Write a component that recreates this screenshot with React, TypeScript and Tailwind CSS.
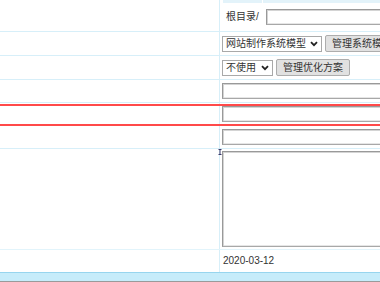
import React from "react";

const font = { fontFamily: '"Liberation Sans", "Noto Sans CJK SC", sans-serif' };

function Chevron() {
  return (
    <svg width="8" height="6" viewBox="0 0 8 6" className="shrink-0">
      <path d="M1 1.2 L4 4.2 L7 1.2" fill="none" stroke="#222" strokeWidth="1.8" />
    </svg>
  );
}

function Input({ w = "w-[320px]" }: { w?: string }) {
  return (
    <div
      className={`${w} h-[16px] shrink-0 bg-white border border-[#a8a8a8] border-t-[#999999] border-l-[#999999] shadow-[inset_1px_1px_0_#d4d4d4,inset_-1px_-1px_0_#e6e6e6]`}
    />
  );
}

function Select({ label, w }: { label: string; w: string }) {
  return (
    <div
      className={`${w} h-[16px] shrink-0 bg-white border border-[#a9a9a9] flex items-center justify-between pl-[3px] pr-[3px] text-[10px] leading-none text-[#333]`}
    >
      <span className="whitespace-nowrap">{label}</span>
      <Chevron />
    </div>
  );
}

function Button({ label, w }: { label: string; w?: string }) {
  return (
    <div
      className={`${w ?? ""} h-[17px] shrink-0 bg-[#e1e1e1] border border-[#adadad] rounded-[2px] flex items-center px-[6px] text-[10px] leading-none text-[#333] whitespace-nowrap overflow-hidden`}
    >
      {label}
    </div>
  );
}

function Row({
  h,
  children,
  className = "",
}: {
  h: string;
  children?: React.ReactNode;
  className?: string;
}) {
  return (
    <div className={`${h} flex border-b border-[#d7eff9] shrink-0 relative ${className}`}>
      <div className="w-[220px] shrink-0 border-r border-[#d7eff9]" />
      <div className="flex-1 flex items-center gap-[3px] pl-[2px] overflow-hidden">{children}</div>
    </div>
  );
}

export default function App() {
  return (
    <div className="w-[380px] h-[282px] overflow-hidden bg-white relative" style={font}>
      {/* Row 1 */}
      <div className="h-[32px] flex border-b border-[#d7eff9] shrink-0">
        <div className="w-[220px] shrink-0 border-r border-[#d7eff9]" />
        <div className="flex-1 flex flex-col overflow-hidden">
          <div className="h-[3px] flex pl-[3px]">
            <div className="w-[39px] bg-[#e3f3fa]" />
            <div className="w-[1px] bg-white" />
            <div className="flex-1 bg-[#e3f3fa]" />
          </div>
          <div className="flex-1 flex items-center pl-[6px] gap-[7px] pb-[1px]">
            <span className="text-[10px] leading-none text-[#333] whitespace-nowrap">根目录/</span>
            <Input w="w-[200px]" />
          </div>
        </div>
      </div>

      {/* Row 2 */}
      <Row h="h-[24px]">
        <Select label="网站制作系统模型" w="w-[100px]" />
        <Button label="管理系统模型" w="w-[80px]" />
      </Row>

      {/* Row 3 */}
      <Row h="h-[24px]">
        <Select label="不使用" w="w-[51px]" />
        <Button label="管理优化方案" />
      </Row>

      {/* Row 4 */}
      <Row h="h-[23px]">
        <Input />
      </Row>

      {/* Row 5 (highlighted) */}
      <Row h="h-[23px]">
        <Input />
        <div className="absolute left-0 right-0 top-[1px] h-[2px] bg-[#ff4a4a]" />
        <div className="absolute left-0 right-0 bottom-[-1px] h-[2px] bg-[#ff4a4a]" />
      </Row>

      {/* Row 6 */}
      <Row h="h-[23px]">
        <Input />
      </Row>

      {/* Row 7 textarea */}
      <div className="h-[101px] flex border-b border-[#e2f4fb] shrink-0">
        <div className="w-[220px] shrink-0 border-r border-[#d7eff9]" />
        <div className="flex-1 pl-[2px] pt-[2px] pb-[2px] overflow-hidden">
          <div className="w-[320px] h-full bg-white border border-[#a8a8a8] border-t-[#999999] border-l-[#999999] shadow-[inset_1px_1px_0_#d4d4d4,inset_-1px_-1px_0_#e6e6e6]" />
        </div>
      </div>

      {/* Row 8 */}
      <div className="h-[22px] flex shrink-0">
        <div className="w-[220px] shrink-0 border-r border-[#d7eff9]" />
        <div className="flex-1 flex items-center pl-[3px] text-[10px] leading-none text-[#333]">
          2020-03-12
        </div>
      </div>

      {/* Footer bar */}
      <div className="h-[11px] bg-[#c6ecfa] border-t border-[#97d5ee] border-b-[2px] border-b-[#9a9a9a]" />

      {/* I-beam cursor */}
      <svg className="absolute left-[218px] top-[149px]" width="4" height="6" viewBox="0 0 4 6">
        <path d="M0.5 0.5 H3.5 M2 0.5 V5.5 M0.5 5.5 H3.5" stroke="#3a3a6a" strokeWidth="1" fill="none" />
      </svg>
    </div>
  );
}
